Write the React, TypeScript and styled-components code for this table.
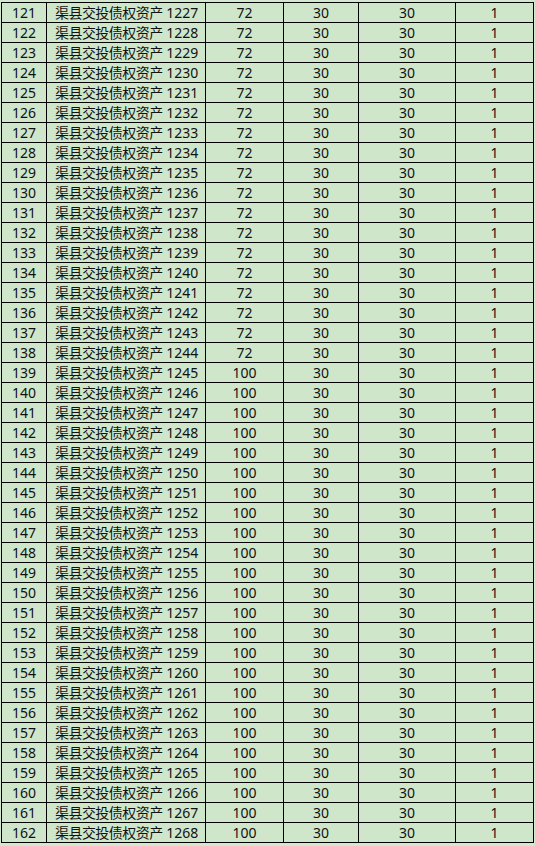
import React from "react"
import styled, {createGlobalStyle} from "styled-components"

const GlobalStyle = createGlobalStyle`
  html, body {
    margin: 0;
    padding: 0;
    background: #d2e8cf;
  }
  body {
    font-family: "Noto Sans", "Noto Sans CJK SC", sans-serif;
  }
`

const Page = styled.div`
  width: 535px;
  height: 846px;
  padding: 2px 0 0 1px;
  box-sizing: border-box;
  overflow: hidden;
`

const Table = styled.table`
  border-collapse: collapse;
  table-layout: fixed;
  width: 532px;
  background: #d0e6cb;
`

const Row = styled.tr`
  height: 20px;
`

const Cell = styled.td<{$left?: boolean}>`
  border: 1px solid #000;
  padding: ${({$left}) => ($left ? "0 0 0 8px" : "0")};
  text-align: ${({$left}) => ($left ? "left" : "center")};
  font-size: 14px;
  line-height: 18px;
  color: #111;
  white-space: nowrap;
  overflow: hidden;
`

const Han = styled.span`
  letter-spacing: -0.55px;
`

const widths = [45, 159, 78, 75, 97, 78]

const rows = Array.from({length: 42}, (_, i) => {
    const no = 121 + i
    return {
        no,
        code: 1227 + i,
        price: no <= 138 ? 72 : 100,
        a: 30,
        b: 30,
        c: 1,
    }
})

export default function App() {
    return <>
        <GlobalStyle/>
        <Page>
            <Table>
                <colgroup>
                    {widths.map((w, i) => <col key={i} style={{width: w}}/>)}
                </colgroup>
                <tbody>
                {rows.map(r => <Row key={r.no}>
                    <Cell>{r.no}</Cell>
                    <Cell $left><Han>渠县交投债权资产</Han> {r.code}</Cell>
                    <Cell>{r.price}</Cell>
                    <Cell>{r.a}</Cell>
                    <Cell>{r.b}</Cell>
                    <Cell>{r.c}</Cell>
                </Row>)}
                </tbody>
            </Table>
        </Page>
    </>
}
